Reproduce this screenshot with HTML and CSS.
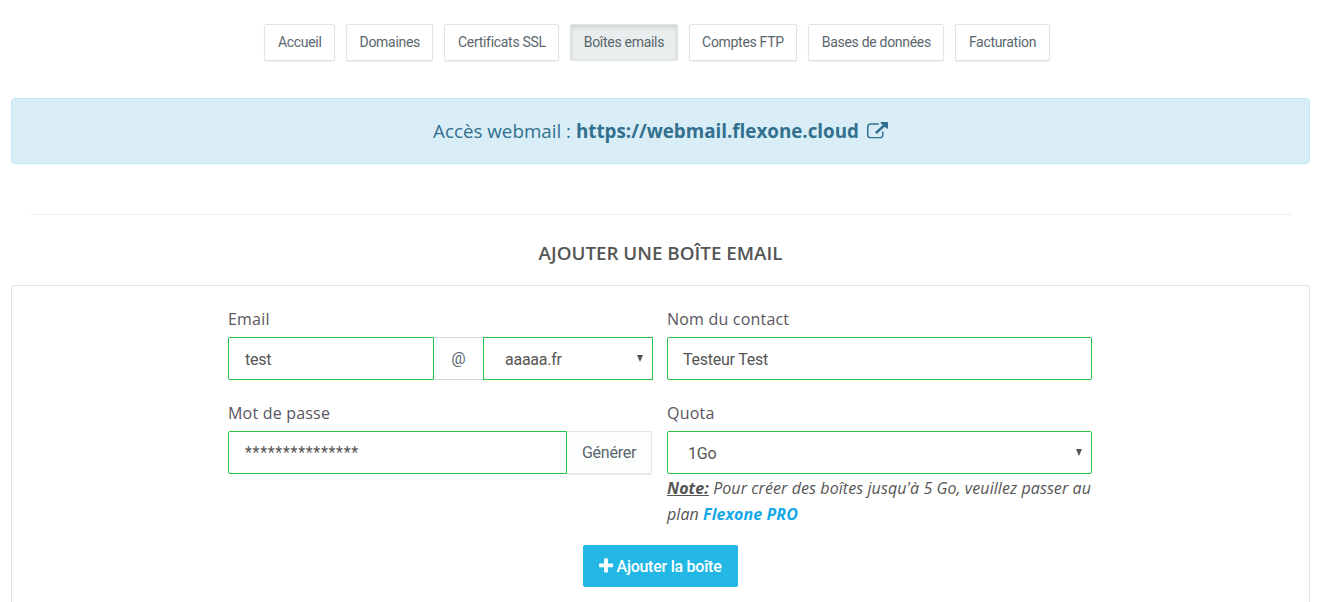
FILE: index.html
```html
<!DOCTYPE html>
<html lang="fr">
<head>
    <meta charset="UTF-8">
    <meta name="viewport" content="width=device-width, initial-scale=1.0">
    <title>Boîtes emails</title>
    <link rel="stylesheet" href="styles.css">
</head>
<body>
    <!-- Navigation -->
    <nav class="tabs">
        <a class="tab" href="#">Accueil</a>
        <a class="tab" href="#">Domaines</a>
        <a class="tab" href="#">Certificats SSL</a>
        <a class="tab active" href="#">Boîtes emails</a>
        <a class="tab" href="#">Comptes FTP</a>
        <a class="tab" href="#">Bases de données</a>
        <a class="tab" href="#">Facturation</a>
    </nav>

    <!-- Webmail -->
    <div class="alert">
        <p class="alert-text">Accès webmail : <a class="alert-link" href="#">https://webmail.flexone.cloud</a><svg class="ext-icon" viewBox="0 0 1792 1792" preserveAspectRatio="none" aria-hidden="true"><path d="M1408 928v320q0 119-84.5 203.5t-203.5 84.5h-832q-119 0-203.5-84.5t-84.5-203.5v-832q0-119 84.5-203.5t203.5-84.5h704q14 0 23 9t9 23v64q0 14-9 23t-23 9h-704q-66 0-113 47t-47 113v832q0 66 47 113t113 47h832q66 0 113-47t47-113v-320q0-14 9-23t23-9h64q14 0 23 9t9 23zm384-864v512q0 26-19 45t-45 19-45-19l-176-176-652 652q-10 10-23 10t-23-10l-114-114q-10-10-10-23t10-23l652-652-176-176q-19-19-19-45t19-45 45-19h512q26 0 45 19t19 45z"/></svg></p>
    </div>

    <hr class="divider">

    <h2 class="section-title">AJOUTER UNE BOÎTE EMAIL</h2>

    <!-- Add mailbox form -->
    <form class="card">
        <div class="form-grid">
            <div class="field">
                <label for="email">Email</label>
                <div class="input-group">
                    <input class="control email-input" type="text" id="email" value="test">
                    <span class="addon">@</span>
                    <div class="select-wrap domain-select">
                        <select class="control" id="domain"><option>aaaaa.fr</option></select>
                    </div>
                </div>
            </div>
            <div class="field">
                <label for="contact">Nom du contact</label>
                <input class="control rounded contact-input" type="text" id="contact" value="Testeur Test">
            </div>
            <div class="field">
                <label for="password">Mot de passe</label>
                <div class="input-group">
                    <input class="control password-input" type="text" id="password" value="***************">
                    <button class="generate" type="button">Générer</button>
                </div>
            </div>
            <div class="field">
                <label for="quota">Quota</label>
                <div class="select-wrap">
                    <select class="control rounded" id="quota"><option>1Go</option></select>
                </div>
                <p class="note"><strong class="note-label">Note:</strong> Pour créer des boîtes jusqu'à 5 Go, veuillez passer au plan <a class="note-link" href="#">Flexone PRO</a></p>
            </div>
        </div>
        <div class="form-actions">
            <button class="submit" type="button">
                <svg class="plus-icon" viewBox="0 0 1792 1792" aria-hidden="true"><path d="M1600 736v192q0 40-28 68t-68 28h-416v416q0 40-28 68t-68 28h-192q-40 0-68-28t-28-68v-416h-416q-40 0-68-28t-28-68v-192q0-40 28-68t68-28h416v-416q0-40 28-68t68-28h192q40 0 68 28t28 68v416h416q40 0 68 28t28 68z"/></svg>
                Ajouter la boîte
            </button>
        </div>
    </form>
</body>
</html>
```

FILE: styles.css
```css
html, body { height: 602px; overflow: hidden; }
body { margin: 0; padding: 24px 11px 0; background-color: #fff; color: #555; font-family: "Open Sans", sans-serif; box-sizing: border-box; }

.tabs { display: flex; justify-content: center; gap: 11px; padding-right: 7px; }
.tab { display: block; height: 37px; line-height: 35px; padding: 0 12.5px; box-sizing: border-box; border: 1px solid #dee5e7; border-radius: 2px; background-color: #fff; box-shadow: 0 1px 1px rgba(90, 90, 90, 0.1); color: #58666e; font-family: Roboto, sans-serif; font-size: 14px; letter-spacing: -0.3px; text-decoration: none; white-space: nowrap; }
.tab.active { background-color: #e9eded; border-color: #dee5e7; box-shadow: inset 0 2px 4px rgba(0, 0, 0, 0.12); }

.alert { height: 66px; margin-top: 37px; box-sizing: border-box; display: flex; align-items: center; justify-content: center; border: 1px solid #bce8f1; border-radius: 4px; background-color: #d9edf7; color: #31708f; }
.alert-text { margin: 0; font-size: 18.8px; line-height: 26px; }
.alert-link { color: #31708f; font-weight: 700; text-decoration: none; }
.ext-icon { width: 21px; height: 19px; margin-left: 8px; vertical-align: -3px; fill: #31708f; }

.divider { height: 1px; margin: 50px 19px 0; border: 0; background-color: #eee; }

.section-title { margin: 26px 0 0; height: 24px; line-height: 24px; text-align: center; color: #555; font-size: 18.8px; font-weight: 600; }

.card { margin-top: 20px; padding: 23px 1px 40px 0; border: 1px solid #e3e3e3; border-radius: 3px; background-color: #fff; }
.form-grid { display: grid; grid-template-columns: 425px 425px; column-gap: 14px; row-gap: 23px; justify-content: center; }
.field label { display: block; height: 20px; line-height: 20px; margin-bottom: 8px; font-size: 16px; letter-spacing: 0.2px; color: #5a5560; }

.input-group { display: flex; }
.control { display: block; width: 100%; height: 43px; padding: 2px 16px 0; box-sizing: border-box; border: 1px solid #27c24c; border-radius: 0; outline: 0; background-color: #fff; color: #555; font-family: Roboto, sans-serif; font-size: 16px; letter-spacing: -0.25px; }
.rounded { border-radius: 2px; }
.contact-input { padding-left: 15px; }
.email-input { width: 206px; flex: none; border-radius: 2px 0 0 2px; }
.password-input { width: 339px; flex: none; padding-top: 0; border-radius: 2px 0 0 2px; letter-spacing: 0.7px; }
.addon { flex: none; width: 49px; height: 43px; line-height: 41px; box-sizing: border-box; border-top: 1px solid #cfdadd; border-bottom: 1px solid #cfdadd; text-align: center; color: #58666e; font-family: Roboto, sans-serif; font-size: 16px; }
.generate { flex: none; width: 85px; height: 43px; padding: 0; border: 1px solid #dee5e7; border-left: 0; border-radius: 0 2px 2px 0; background-color: #fcfdfd; box-shadow: 0 1px 1px rgba(90, 90, 90, 0.1); color: #58666e; font-family: Roboto, sans-serif; font-size: 16px; letter-spacing: -0.25px; }

.select-wrap { position: relative; }
.select-wrap::after { content: ""; position: absolute; top: 18px; right: 10px; border-left: 3.5px solid transparent; border-right: 3.5px solid transparent; border-top: 7px solid #555; pointer-events: none; }
.domain-select { width: 170px; flex: none; }
.select-wrap select { appearance: none; -webkit-appearance: none; padding-left: 20px; }
.domain-select select { padding-left: 21px; }

.note { margin: 1px 0 0; line-height: 26px; font-size: 16px; letter-spacing: 0.08px; font-style: italic; color: #555; }
.note-label { text-decoration: underline; font-weight: 700; }
.note-link { color: #13a9ea; font-weight: 700; text-decoration: none; }

.form-actions { display: flex; justify-content: center; margin-top: 18px; }
.submit { display: flex; align-items: center; justify-content: center; gap: 2px; width: 155px; height: 42px; padding: 0 2px 0 0; border: 1px solid #23b7e5; border-radius: 2px; background-color: #23b7e5; color: #fff; font-family: Roboto, sans-serif; font-size: 16px; font-weight: 500; letter-spacing: -0.25px; }
.plus-icon { width: 18px; height: 18px; fill: #fff; }
```
